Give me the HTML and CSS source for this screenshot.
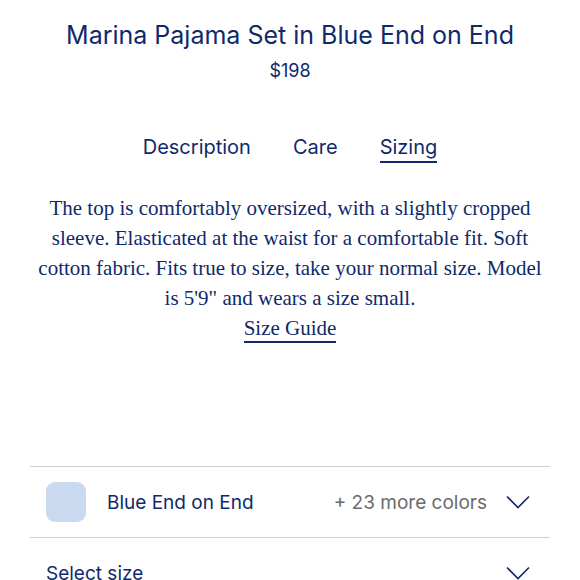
FILE: index.html
```html
<!DOCTYPE html>
<html>
<head>
<meta charset="utf-8">
<link rel="stylesheet" href="styles.css">
</head>
<body>
<div class="page">
  <h1 class="title">Marina Pajama Set in Blue End on End</h1>
  <div class="price">$198</div>
  <nav class="tabs">
    <span class="tab">Description</span>
    <span class="tab">Care</span>
    <span class="tab active">Sizing</span>
  </nav>
  <p class="desc">The top is comfortably oversized, with a slightly cropped sleeve. Elasticated at the waist for a comfortable fit. Soft cotton fabric. Fits true to size, take your normal size. Model is 5'9" and wears a size small.<br><a class="guide">Size Guide</a></p>
  <div class="options">
    <div class="row">
      <span class="swatch"></span>
      <span class="label">Blue End on End</span>
      <span class="more">+ 23 more colors</span>
      <svg class="chev" width="24" height="14" viewBox="0 0 24 14"><path d="M1 1.5 L12 12.5 L23 1.5" fill="none" stroke="#0f2a6b" stroke-width="1.6"/></svg>
    </div>
    <div class="row">
      <span class="label">Select size</span>
      <svg class="chev" width="24" height="14" viewBox="0 0 24 14"><path d="M1 1.5 L12 12.5 L23 1.5" fill="none" stroke="#0f2a6b" stroke-width="1.6"/></svg>
    </div>
  </div>
</div>
</body>
</html>
```
FILE: styles.css
```css
html, body { margin: 0; padding: 0; background: #fff; }
body { font-family: "Inter", "Liberation Sans", sans-serif; color: #0f2a6b; }
.page { width: 580px; height: 580px; overflow: hidden; }
.title { margin: 0; padding-top: 18px; font-size: 25px; font-weight: 400; text-align: center; line-height: 34px; }
.price { text-align: center; font-size: 18px; line-height: 22px; margin-top: 8px; }
.tabs { display: flex; justify-content: center; gap: 42px; margin-top: 52px; font-size: 20px; line-height: 26px; }
.tab { padding-bottom: 1px; }
.tab.active { border-bottom: 2px solid #0f2a6b; }
.desc { margin: 30px 30px 0; text-align: center; font-family: "Liberation Serif", serif; font-size: 21px; line-height: 30px; }
.guide { text-decoration: none; border-bottom: 2px solid #0f2a6b; padding-bottom: 1px; }
.options { margin: 123px 30px 0; }
.row { display: flex; align-items: center; border-top: 1.5px solid #cfcfcf; height: 70px; padding: 0 20px 0 16px; }
.swatch { width: 40px; height: 40px; border-radius: 9px; background: #c9daf0; margin-right: 21px; }
.label { flex: 1; font-size: 19px; }
.more { color: #6b6b6b; font-size: 19px; margin-right: 19px; }
.chev { display: block; }
```
